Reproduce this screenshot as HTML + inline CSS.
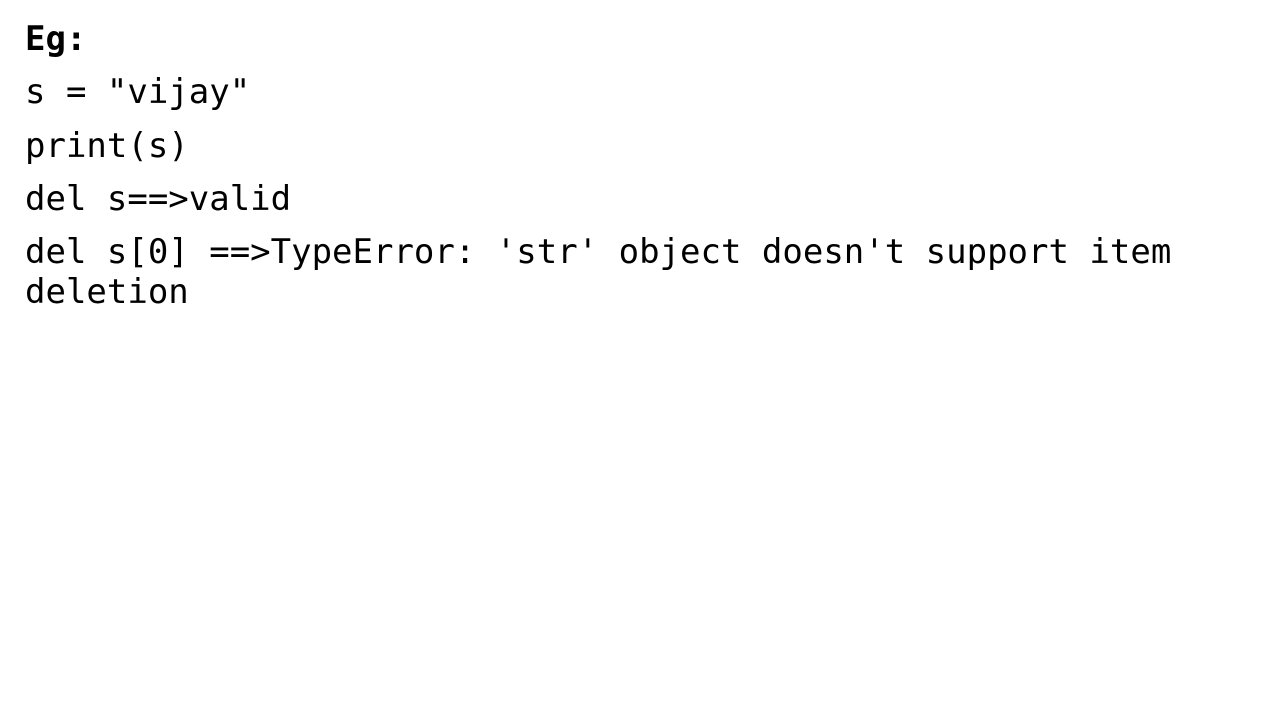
<!DOCTYPE html>
<html><head><meta charset="utf-8"><style>
html,body{margin:0;padding:0;background:#fff;width:1280px;height:720px;overflow:hidden}
.l{position:absolute;left:25px;font-family:"DejaVu Sans Mono","Liberation Mono",monospace;font-size:34px;line-height:40px;color:#000;white-space:pre}
</style></head><body>
<div class="l" style="top:19px;font-weight:bold">Eg:</div>
<div class="l" style="top:72px">s = "vijay"</div>
<div class="l" style="top:126px">print(s)</div>
<div class="l" style="top:179px">del s==&gt;valid</div>
<div class="l" style="top:232px">del s[0] ==&gt;TypeError: 'str' object doesn't support item</div>
<div class="l" style="top:272px">deletion</div>
</body></html>
